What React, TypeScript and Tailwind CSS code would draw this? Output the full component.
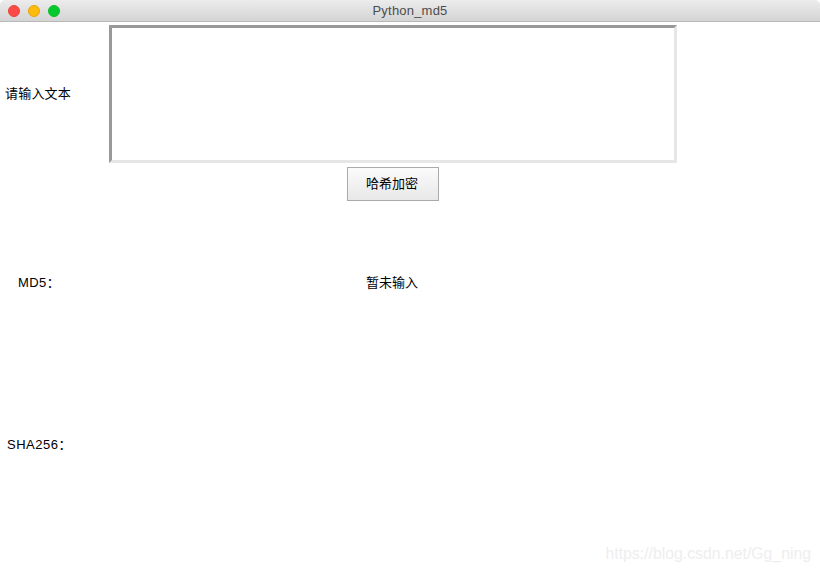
const cjk = "font-['Liberation_Sans','Noto_Sans_CJK_SC',sans-serif]";

export default function App() {
  return (
    <div className={`relative flex h-[572px] w-[820px] flex-col overflow-hidden bg-white text-[13px] text-black ${cjk}`}>
      {/* title bar */}
      <div className="relative flex h-[22px] items-center justify-center rounded-t-[5px] border-b border-[#b8b8b8] bg-gradient-to-b from-[#ececec] to-[#d4d4d4]">
        <div className="absolute left-[8px] top-[5px] flex gap-[8px]">
          <span className="size-[12px] rounded-full border border-[#e5453d] bg-[#fc4b46]" />
          <span className="size-[12px] rounded-full border border-[#e5a50f] bg-[#fdbb0b]" />
          <span className="size-[12px] rounded-full border border-[#0dbb25] bg-[#04c92e]" />
        </div>
        <span className="text-[13px] tracking-[0.2px] text-[#4d4d4d]">Python_md5</span>
      </div>

      {/* form */}
      <div className="grid grid-cols-[109px_568px] grid-rows-[138px_38px_92px_162px] pt-[3px]">
        <div className="flex items-center pl-[5px] tracking-[0.2px]">请输入文本</div>
        <textarea className="h-[138px] w-[568px] resize-none border-[3px] border-t-[#999999] border-r-[#e6e6e6] border-b-[#e6e6e6] border-l-[#999999] bg-white outline-none" />

        <div />
        <div className="flex items-end justify-center">
          <button className="h-[34px] w-[92px] border border-[#aaaaaa] bg-gradient-to-b from-[#fbfbfb] to-[#e8e8e8] pr-[2px] text-[13px] text-black">
            哈希加密
          </button>
        </div>

        <div className="flex items-end pl-[18px]">
          <span className="leading-[20px] tracking-[0.4px]">MD5：</span>
        </div>
        <div className="flex items-end justify-center pr-[2px]">
          <span className="leading-[20px]">暂未输入</span>
        </div>

        <div className="flex items-end pl-[7px]">
          <span className="leading-[20px] tracking-[0.5px]">SHA256：</span>
        </div>
        <div />
      </div>

      {/* watermark */}
      <span className="absolute bottom-[6px] right-[9px] text-[15.8px] text-[#eeeeee]">https://blog.csdn.net/Gg_ning</span>
    </div>
  );
}
